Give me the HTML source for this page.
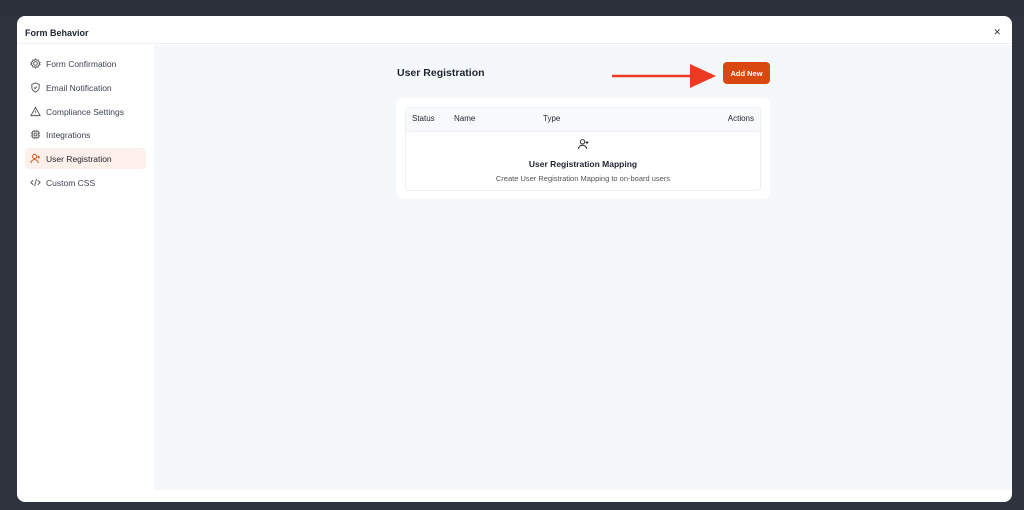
<!DOCTYPE html>
<html><head><style>
*{margin:0;padding:0;box-sizing:border-box}
body{width:1024px;height:510px;background:#2e333d;font-family:"Liberation Sans",sans-serif;position:relative;overflow:hidden}
.top{position:absolute;left:0;top:0;width:1024px;height:16px;background:#2b303a}
.modal{position:absolute;left:17px;top:16px;width:995px;height:486px;background:#fff;border-radius:8px;overflow:hidden}
.hdr{height:28px;border-bottom:1px solid #eef0f3;font-size:9px;font-weight:bold;color:#1e2530;padding:12px 0 0 8px}
.x{position:absolute;right:11px;top:11px;font-size:9px;color:#333}
.side{position:absolute;left:0;top:29px;width:137px}
.item{position:absolute;left:8px;width:121px;height:21px;font-size:8.5px;color:#3b4350;padding:6px 0 0 21px;border-radius:4px}
.item svg{position:absolute;left:5px;top:5px}
.act{background:#fdf0ea;color:#1e2530}
.main{position:absolute;left:137px;top:29px;right:0;height:445px;background:#f5f8fa}
.title{position:absolute;left:243px;top:22px;font-size:10.5px;font-weight:bold;color:#1e2530}
.btn{position:absolute;left:569px;top:17px;width:47px;height:22px;background:#d9480f;border-radius:4px;color:#fff;font-size:7.5px;font-weight:bold;text-align:center;line-height:23px}
.card{position:absolute;left:242px;top:53px;width:374px;height:101px;background:#fff;border-radius:7px}
.tbl{position:absolute;left:9px;top:9px;width:356px;height:84px;border:1px solid #eceff3;border-radius:4px}
.th{height:24px;background:#f8f9fb;border-bottom:1px solid #eceff3;font-size:8px;color:#1e2530;position:relative}
.th span{position:absolute;top:6px}
</style></head><body>
<div class="top"></div>
<div class="modal">
<div class="hdr">Form Behavior</div>
<div class="x">✕</div>
<div class="side">
<div class="item" style="top:8px"><svg width="11" height="11" viewBox="0 0 12 12" fill="none" stroke="#555" stroke-width="1"><circle cx="6" cy="6" r="2"/><path d="M6 1l1 1.5 1.8-.4.4 1.8L11 5l-1 1 1 1-1.8 1.1-.4 1.8-1.8-.4L6 11 5 9.5l-1.8.4-.4-1.8L1 7l1-1-1-1 1.8-1.1.4-1.8 1.8.4z"/></svg>Form Confirmation</div>
<div class="item" style="top:32px"><svg width="11" height="11" viewBox="0 0 12 12" fill="none" stroke="#555" stroke-width="1"><path d="M6 1l4 1.5V6c0 2.5-2 4-4 5-2-1-4-2.5-4-5V2.5z"/><path d="M4.3 6l1.2 1.2L7.8 5"/></svg>Email Notification</div>
<div class="item" style="top:56px"><svg width="11" height="11" viewBox="0 0 12 12" fill="none" stroke="#555" stroke-width="1"><path d="M6 1.5L11 10.5H1z"/><path d="M6 5v2.5M6 8.8v.3"/></svg>Compliance Settings</div>
<div class="item" style="top:79px"><svg width="11" height="11" viewBox="0 0 12 12" fill="none" stroke="#555" stroke-width="1"><rect x="2.5" y="2.5" width="7" height="7" rx="1"/><rect x="4.5" y="4.5" width="3" height="3"/><path d="M4.5 1v1.5M7.5 1v1.5M4.5 9.5V11M7.5 9.5V11M1 4.5h1.5M1 7.5h1.5M9.5 4.5H11M9.5 7.5H11"/></svg>Integrations</div>
<div class="item act" style="top:103px"><svg width="11" height="11" viewBox="0 0 12 12" fill="none" stroke="#d9480f" stroke-width="1"><circle cx="5" cy="3.8" r="2.2"/><path d="M1 11c0-2.3 1.8-3.8 4-3.8s4 1.5 4 3.8"/><path d="M9.5 3v3M8 4.5h3"/></svg>User Registration</div>
<div class="item" style="top:127px"><svg width="11" height="11" viewBox="0 0 12 12" fill="none" stroke="#555" stroke-width="1"><path d="M3.5 3.5L1 6l2.5 2.5M8.5 3.5L11 6 8.5 8.5M7 2L5 10"/></svg>Custom CSS</div>
</div>
<div class="main">
<div class="title">User Registration</div>
<svg style="position:absolute;left:458px;top:18px" width="110" height="26" viewBox="0 0 110 26"><path d="M0 13h80" stroke="#ee3a23" stroke-width="2.5"/><path d="M78 1L104 13 78 25z" fill="#ee3a23"/></svg>
<div class="btn">Add New</div>
<div class="card"><div class="tbl">
<div class="th"><span style="left:6px">Status</span><span style="left:48px">Name</span><span style="left:137px">Type</span><span style="right:6px">Actions</span></div>
<svg style="position:absolute;left:171px;top:30px" width="13" height="12" viewBox="0 0 12 12" fill="none" stroke="#333" stroke-width="1"><circle cx="5" cy="3.8" r="2.2"/><path d="M1 11c0-2.3 1.8-3.8 4-3.8s4 1.5 4 3.8"/><path d="M9.5 3v3M8 4.5h3"/></svg>
<div style="position:absolute;left:0;right:0;top:51px;text-align:center;font-size:8.5px;font-weight:bold;color:#1e2530">User Registration Mapping</div>
<div style="position:absolute;left:0;right:0;top:66px;text-align:center;font-size:7.5px;color:#555">Create User Registration Mapping to on-board users</div>
</div></div>
</div>
</div>
</body></html>
